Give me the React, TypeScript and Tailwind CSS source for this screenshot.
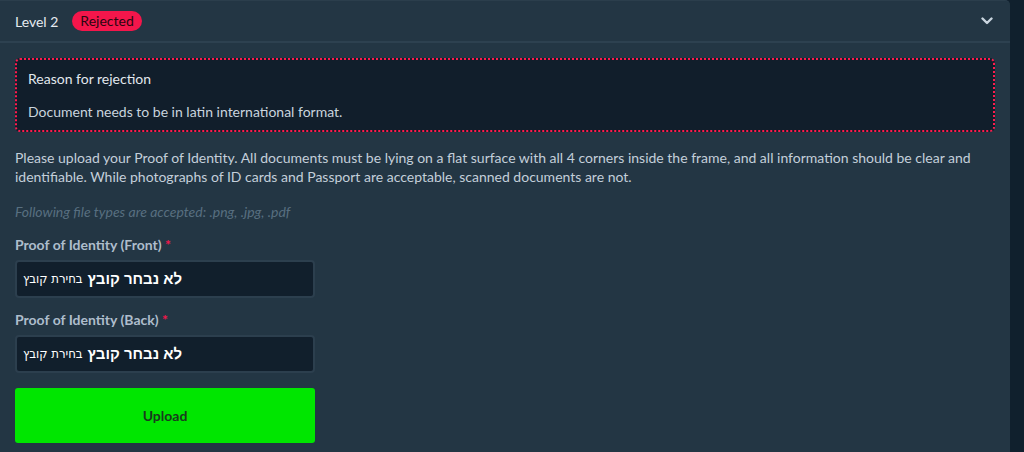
import React from "react";

function FileRow() {
  return (
    <div className="flex h-[38px] w-[300px] items-center gap-[5px] rounded-[4px] border-2 border-[#2c3f4e] bg-[#111f2c] pl-[6px] font-['Liberation_Sans',sans-serif] text-white">
      <span className="font-['DejaVu_Sans_Condensed',sans-serif] text-[13px]">בחירת קובץ</span>
      <span className="text-[15px] font-bold">לא נבחר קובץ</span>
    </div>
  );
}

export default function App() {
  return (
    <div className="h-[452px] w-[1024px] overflow-hidden bg-[#10202d] pr-[14px] font-['Lato',sans-serif]">
      <div className="h-full rounded-tr-[5px] border-t border-[#2b3e4c] bg-[#233644]">
        <div className="flex h-[42px] items-center justify-between border-b-2 border-[#2d4150] pl-[15px] pr-[17px]">
          <div className="flex items-center gap-[14px]">
            <span className="text-[14px] text-[#e6ebf0]">Level 2</span>
            <span className="rounded-full bg-[#f4164b] px-[8px] py-[1px] text-[14px] leading-[18px] text-[#2a0710]">
              Rejected
            </span>
          </div>
          <svg width="12" height="8" viewBox="0 0 12 8" className="text-[#c9d5df]">
            <path d="M1.5 1.5 L6 6 L10.5 1.5" fill="none" stroke="currentColor" strokeWidth="2.4" strokeLinecap="round" strokeLinejoin="round" />
          </svg>
        </div>
        <div className="px-[15px] pt-[15px]">
          <div className="flex h-[74px] flex-col justify-center gap-[14px] rounded-[5px] border-2 border-dotted border-[#ff1b4d] bg-[#111e2b] px-[11px] pb-[1px] text-[14px] leading-[19px] text-[#e2e8ee]">
            <div>Reason for rejection</div>
            <div className="text-[#c9d4de]">Document needs to be in latin international format.</div>
          </div>
          <p className="mt-[16px] text-[14px] leading-[19px] text-[#c3cfda]">
            Please upload your Proof of Identity. All documents must be lying on a flat surface with all 4 corners inside the frame, and all information should be clear and identifiable. While photographs of ID cards and Passport are acceptable, scanned documents are not.
          </p>
          <p className="mt-[16px] text-[14px] italic leading-[19px] text-[#586f80]">
            Following file types are accepted: .png, .jpg, .pdf
          </p>
          <div className="mt-[14px] text-[14px] font-bold leading-[19px] text-[#aebdcc]">
            Proof of Identity (Front) <span className="text-[#f4164b]">*</span>
          </div>
          <div className="mt-[6px]">
            <FileRow />
          </div>
          <div className="mt-[12px] text-[14px] font-bold leading-[19px] text-[#aebdcc]">
            Proof of Identity (Back) <span className="text-[#f4164b]">*</span>
          </div>
          <div className="mt-[6px]">
            <FileRow />
          </div>
          <button className="mt-[15px] flex h-[55px] w-[300px] items-center justify-center rounded-[3px] bg-[#00e600] text-[14px] font-bold text-[#1a3a1e]">
            Upload
          </button>
        </div>
      </div>
    </div>
  );
}
